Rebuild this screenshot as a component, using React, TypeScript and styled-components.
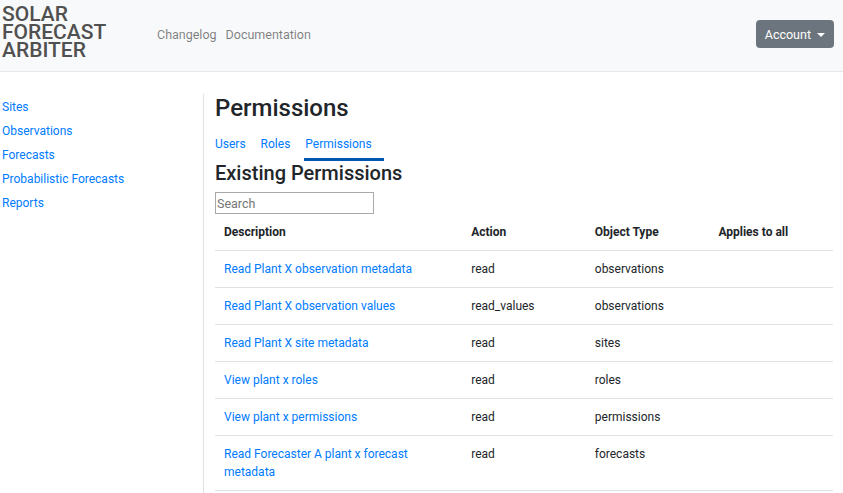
import styled, { createGlobalStyle } from "styled-components";

const Global = createGlobalStyle`
  html, body {
    margin: 0;
    padding: 0;
    background: #fff;
    font-family: Roboto, "Liberation Sans", sans-serif;
    color: #212529;
  }
  * { box-sizing: border-box; }
`;

const Header = styled.header`
  height: 72px;
  background: #f8f9fa;
  border-bottom: 1px solid #e6e7e8;
  display: flex;
  align-items: center;
  padding: 0 9px 0 2px;
`;

const Logo = styled.div`
  font-size: 21px;
  line-height: 18px;
  font-weight: 500;
  color: #505050;
  width: 155px;
  margin-top: -7px;
`;

const Nav = styled.nav`
  display: flex;
  gap: 9px;
  flex: 1;
  margin-top: -2px;
`;

const NavLink = styled.a`
  font-size: 12.5px;
  color: rgba(0, 0, 0, 0.5);
  text-decoration: none;
`;

const AccountButton = styled.button`
  background: #6c757d;
  color: #fff;
  border: none;
  border-radius: 4px;
  height: 28px;
  padding: 0 9px;
  font-family: inherit;
  font-size: 12.5px;
  display: flex;
  align-items: center;
  gap: 6px;
  margin-top: -3px;
  &::after {
    content: "";
    border-top: 4px solid #fff;
    border-left: 4px solid transparent;
    border-right: 4px solid transparent;
    margin-top: 1px;
  }
`;

const Body = styled.div`
  display: flex;
  padding-top: 22px;
  padding-right: 10px;
`;

const Sidebar = styled.aside`
  width: 204px;
  border-right: 1px solid #e2e2e2;
  padding: 1px 0 0 2px;
  display: flex;
  flex-direction: column;
  min-height: 400px;
`;

const SideLink = styled.a`
  font-size: 12px;
  line-height: 24px;
  color: #007bff;
  text-decoration: none;
`;

const Main = styled.main`
  flex: 1;
  padding-left: 11px;
`;

const Title = styled.h2`
  font-size: 24px;
  font-weight: 500;
  line-height: 29px;
  margin: 0 0 12px;
`;

const Tabs = styled.div`
  display: flex;
  gap: 3px;
`;

const Tab = styled.a<{ $active?: boolean }>`
  font-size: 12px;
  line-height: 18px;
  color: #007bff;
  text-decoration: none;
  padding: 0 12px 5px 0;
  border-bottom: 3px solid ${(p) => (p.$active ? "#0056b3" : "transparent")};
  margin-left: ${(p) => (p.$active ? "-1px" : "0")};
  padding-left: ${(p) => (p.$active ? "1px" : "0")};
`;

const SubTitle = styled.h3`
  font-size: 20px;
  font-weight: 500;
  line-height: 24px;
  margin: 0 0 7px;
`;

const Search = styled.input`
  display: block;
  width: 159px;
  height: 22px;
  border: 1px solid #a9a9a9;
  padding: 0 1px;
  font-family: inherit;
  font-size: 12.5px;
  color: #212529;
  &::placeholder {
    color: #757575;
  }
`;

const Table = styled.table`
  width: 100%;
  border-collapse: collapse;
  font-size: 12px;
  line-height: 18px;
`;

const Th = styled.th<{ $w: string }>`
  width: ${(p) => p.$w};
  text-align: left;
  font-weight: 700;
  padding: 9px 9px;
  border-bottom: 1px solid #dee2e6;
`;

const Td = styled.td`
  padding: 9px 9px;
  vertical-align: top;
  border-bottom: 1px solid #dee2e6;
`;

const RowLink = styled.a`
  color: #007bff;
  text-decoration: none;
`;

const rows = [
  ["Read Plant X observation metadata", "read", "observations"],
  ["Read Plant X observation values", "read_values", "observations"],
  ["Read Plant X site metadata", "read", "sites"],
  ["View plant x roles", "read", "roles"],
  ["View plant x permissions", "read", "permissions"],
  ["Read Forecaster A plant x forecast metadata", "read", "forecasts"],
];

export default function App() {
  return (
    <>
      <Global />
      <Header>
        <Logo>
          SOLAR
          <br />
          FORECAST
          <br />
          ARBITER
        </Logo>
        <Nav>
          <NavLink href="#">Changelog</NavLink>
          <NavLink href="#">Documentation</NavLink>
        </Nav>
        <AccountButton>Account</AccountButton>
      </Header>
      <Body>
        <Sidebar>
          <SideLink href="#">Sites</SideLink>
          <SideLink href="#">Observations</SideLink>
          <SideLink href="#">Forecasts</SideLink>
          <SideLink href="#">Probabilistic Forecasts</SideLink>
          <SideLink href="#">Reports</SideLink>
        </Sidebar>
        <Main>
          <Title>Permissions</Title>
          <Tabs>
            <Tab href="#">Users</Tab>
            <Tab href="#">Roles</Tab>
            <Tab href="#" $active>
              Permissions
            </Tab>
          </Tabs>
          <SubTitle>Existing Permissions</SubTitle>
          <Search placeholder="Search" />
          <Table>
            <thead>
              <tr>
                <Th $w="40%">Description</Th>
                <Th $w="20%">Action</Th>
                <Th $w="20%">Object Type</Th>
                <Th $w="20%">Applies to all</Th>
              </tr>
            </thead>
            <tbody>
              {rows.map(([d, a, o]) => (
                <tr key={d}>
                  <Td>
                    <RowLink href="#">{d}</RowLink>
                  </Td>
                  <Td>{a}</Td>
                  <Td>{o}</Td>
                  <Td />
                </tr>
              ))}
            </tbody>
          </Table>
        </Main>
      </Body>
    </>
  );
}
